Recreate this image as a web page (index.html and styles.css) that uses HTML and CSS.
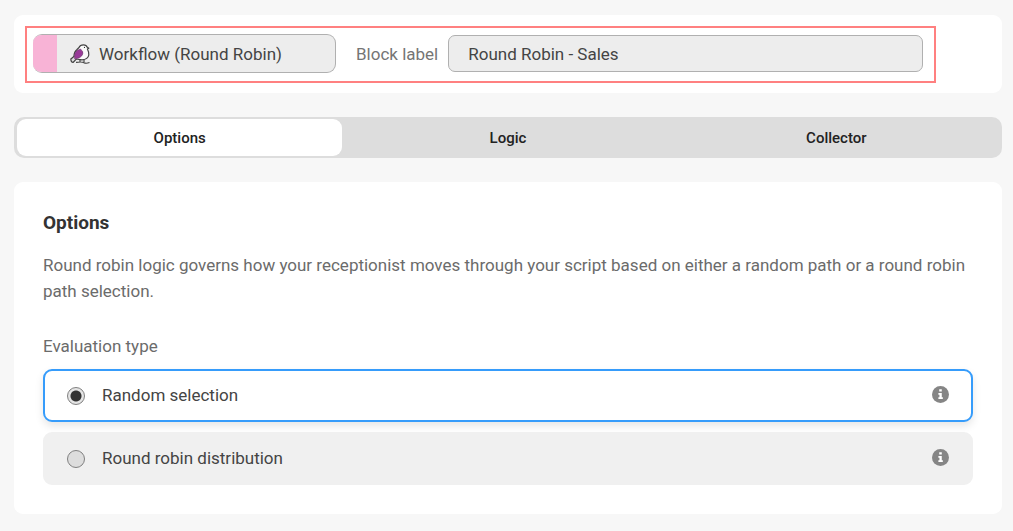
FILE: index.html
```
<!DOCTYPE html>
<html lang="en">
<head>
    <meta charset="UTF-8">
    <meta name="viewport" content="width=device-width, initial-scale=1.0">
    <title>Workflow (Round Robin)</title>
    <link rel="stylesheet" href="styles.css">
</head>
<body>
    <!-- Block header -->
    <header class="card block-header">
        <div class="highlight">
            <div class="block-type">
                <span class="block-color"></span>
                <svg class="bird" viewBox="0 0 20 20" aria-hidden="true">
                    <path d="M4 12Q4 8 7 5.500L9 3.500Q10 0.800 13.500 0.800Q16.500 0.800 17 3L18.800 4.200L17.400 5Q19 8 18.800 11Q18 15.500 12 15.800L6 15Z" fill="#fafafa" stroke="#444" stroke-width="1.200" stroke-linejoin="round"/>
                    <path d="M4.500 12L0.800 15Q1 18.500 3 18.500L6.500 14.800" fill="#ddd" stroke="#444" stroke-width="1.200" stroke-linejoin="round"/>
                    <path d="M4.600 14.800Q3.800 9 7 6.500L10.500 5Q13.500 7.500 12.800 10Q11 14.500 4.600 14.800Z" fill="#983a98" stroke="#6b3a6c" stroke-width="0.600"/>
                    <path d="M10 15.500V18M14 15.500V18M6 18.400Q12 17.500 14 18.700T19.500 18.500" fill="none" stroke="#444" stroke-width="1.200"/>
                    <circle cx="14.500" cy="3.400" r="0.600" fill="#333"/>
                </svg>
                <span>Workflow (Round Robin)</span>
            </div>
            <label class="block-label" for="blockLabel">Block label</label>
            <input class="block-input" id="blockLabel" type="text" value="Round Robin - Sales">
        </div>
    </header>

    <!-- Tabs -->
    <nav class="tabs">
        <button class="tab active" type="button">Options</button>
        <button class="tab" type="button">Logic</button>
        <button class="tab" type="button">Collector</button>
    </nav>

    <!-- Options -->
    <main class="card options">
        <h1>Options</h1>
        <p>Round robin logic governs how your receptionist moves through your script based on either a random path or a round robin path selection.</p>
        <fieldset class="choices">
            <legend>Evaluation type</legend>
            <div class="choice">
                <input type="radio" name="evaluation" id="random" checked>
                <label for="random">Random selection</label>
                <button class="info" type="button" aria-label="About random selection">
                    <svg viewBox="0 0 16 16" aria-hidden="true">
                        <circle cx="8" cy="8" r="8" fill="#858585"/>
                        <path d="M6.800 3h2.400v2.200H6.800zM6 6.500h3.200v4h1V12.300H6v-1.800h1V8.200H6z" fill="#fff"/>
                    </svg>
                </button>
            </div>
            <div class="choice">
                <input type="radio" name="evaluation" id="distribution">
                <label for="distribution">Round robin distribution</label>
                <button class="info" type="button" aria-label="About round robin distribution">
                    <svg viewBox="0 0 16 16" aria-hidden="true">
                        <circle cx="8" cy="8" r="8" fill="#858585"/>
                        <path d="M6.800 3h2.400v2.200H6.800zM6 6.500h3.200v4h1V12.300H6v-1.800h1V8.200H6z" fill="#fff"/>
                    </svg>
                </button>
            </div>
        </fieldset>
    </main>
</body>
</html>
```
FILE: styles.css
```
* {
    box-sizing: border-box;
}

body {
    margin: 0;
    padding: 15px 11px 16px 14px;
    display: flex;
    flex-direction: column;
    gap: 24px;
    font-family: Roboto, "Liberation Sans", sans-serif;
    font-size: 17px;
    line-height: 26px;
    color: #444;
    background-color: #f7f7f7;
}

.card {
    background-color: white;
    border-radius: 9px;
}

.block-header {
    padding: 11px 66px 10px 11px;
}

.highlight {
    display: flex;
    align-items: center;
    padding: 6px 11px 8px 6px;
    border: 2px solid #ff8080;
}

.block-type {
    display: flex;
    align-items: center;
    width: 303px;
    height: 39px;
    overflow: hidden;
    border: 1px solid #b0b0b0;
    border-left: none;
    border-radius: 9px;
    background-color: #ededed;
}

.block-color {
    align-self: stretch;
    width: 24px;
    background-color: #f8b3d6;
}

.bird {
    width: 20px;
    height: 20px;
    margin: 0 9px 0 13px;
}

.block-label {
    margin: 0 10px 0 20px;
    color: #757575;
}

.block-input {
    flex: 1;
    min-width: 0;
    height: 37px;
    padding: 0 19px;
    border: 1px solid #b0b0b0;
    border-radius: 7px;
    background-color: #ededed;
    font: inherit;
    color: #444;
}

.tabs {
    display: grid;
    grid-template-columns: 1fr 1fr 1fr;
    gap: 3px;
    padding: 2px 3px;
    border-radius: 10px;
    background-color: #ddd;
}

.tab {
    height: 37px;
    border: none;
    border-radius: 9px;
    background: none;
    font: inherit;
    font-size: 15px;
    font-weight: 500;
    color: #222;
    cursor: pointer;
}

.tab.active {
    background-color: white;
}

.options {
    padding: 28px 29px 29px;
}

h1 {
    margin: 0;
    font-size: 19px;
    font-weight: 700;
    line-height: 26px;
    color: #333;
}

p {
    margin: 16px 0 29px;
    color: #6b6b6b;
}

.choices {
    display: flex;
    flex-direction: column;
    gap: 10px;
    margin: 0;
    padding: 0;
    border: none;
}

legend {
    margin-bottom: 10px;
    padding: 0;
    color: #6b6b6b;
}

.choice {
    display: flex;
    align-items: center;
    height: 53px;
    padding: 0 22px 2px;
    border: 2px solid #f0f0f0;
    border-radius: 9px;
    background-color: #f0f0f0;
}

.choice:has(input:checked) {
    border-color: #369cfb;
    background-color: white;
    box-shadow: 0 4px 9px rgba(0, 0, 0, 0.1);
}

.choice input {
    appearance: none;
    width: 18px;
    height: 18px;
    margin: 2px 17px 0 0;
    border: 1px solid #808080;
    border-radius: 50%;
    background-color: #ddd;
}

.choice input:checked {
    background: radial-gradient(circle, #333 0 5px, #e4e4e4 6px);
}

.choice label {
    flex: 1;
}

.info {
    display: flex;
    padding: 0;
    border: none;
    background: none;
    cursor: pointer;
}

.info svg {
    width: 17px;
    height: 17px;
}
```
